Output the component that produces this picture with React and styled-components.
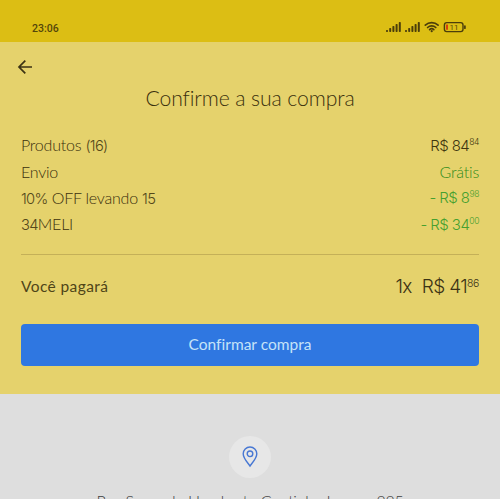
import React from 'react';
import styled, { createGlobalStyle } from 'styled-components';

const GlobalStyle = createGlobalStyle`
  body {
    margin: 0;
    background: #dedede;
    overflow: hidden;
  }
`;

const Screen = styled.div`
  box-sizing: border-box;
  width: 500px;
  height: 499px;
  overflow: hidden;
  background: #dedede;
  font-family: Lato, sans-serif;
  font-variant-ligatures: none;
  color: #3a300c;
`;

const StatusBar = styled.div`
  box-sizing: border-box;
  display: flex;
  justify-content: space-between;
  height: 42px;
  padding: 20px 33px 0 32px;
  background: #dcbe14;
`;

const Clock = styled.span`
  font-family: Roboto, sans-serif;
  font-size: 10.5px;
  font-weight: 500;
  line-height: 17px;
  color: #54460a;
`;

const StatusIcons = styled.svg`
  display: block;
  width: 82px;
  height: 16px;
`;

const Summary = styled.div`
  box-sizing: border-box;
  height: 352px;
  padding: 16px 21px 0;
  background: #e5d26c;
`;

const BackIcon = styled.svg`
  display: block;
  width: 18px;
  height: 18px;
  margin-left: -5px;
`;

const Title = styled.h1`
  margin: 8px 0 0;
  text-align: center;
  font-size: 21.2px;
  font-weight: 300;
  line-height: 28px;
  letter-spacing: -0.1px;
`;

const Lines = styled.div`
  display: grid;
  grid-auto-rows: 26.4px;
  margin-top: 20px;
`;

const Line = styled.div`
  display: flex;
  justify-content: space-between;
  align-items: center;
  font-size: 16px;
  font-weight: 300;
`;

const Label = styled.span`
  letter-spacing: -0.22px;
`;

const Amount = styled.span`
  font-family: Inter, sans-serif;
  font-size: 15px;
  letter-spacing: -0.55px;
  color: ${(props) => (props.$green ? '#46a02f' : '#40360f')};
`;

const Free = styled.span`
  font-size: 16px;
  letter-spacing: -0.2px;
  color: #2f8c1a;
`;

const Num = styled.span`
  font-family: Inter, sans-serif;
  font-weight: 300;
  font-size: 0.92em;
  letter-spacing: -0.7px;
  color: #54481a;
`;

const Cents = styled.sup`
  font-size: ${(props) => props.$size || '8.5px'};
  line-height: 0;
  vertical-align: 6px;
  letter-spacing: -0.4px;
`;

const Divider = styled.hr`
  height: 1px;
  margin: 16px 0 0;
  border: 0;
  background: #c4b058;
`;

const Total = styled.div`
  display: flex;
  justify-content: space-between;
  align-items: center;
  height: 30px;
  margin-top: 17px;
  color: #4f4518;
`;

const TotalLabel = styled.span`
  margin-top: -2px;
  font-size: 15.5px;
  letter-spacing: 0.4px;
`;

const TotalAmount = styled.span`
  display: flex;
  gap: 10px;
  font-family: Inter, sans-serif;
  font-weight: 300;
  font-size: 19px;
  letter-spacing: -0.65px;
  color: #3c3314;
`;

const Button = styled.button`
  display: block;
  width: 100%;
  height: 42px;
  margin-top: 22px;
  padding: 0 0 2px;
  border: 0;
  border-radius: 4px;
  background: #2f77e1;
  color: #c5e3f8;
  font-family: Lato, sans-serif;
  font-size: 15.5px;
  font-variant-ligatures: none;
`;

const Delivery = styled.div`
  display: flex;
  flex-direction: column;
  align-items: center;
  padding-top: 42px;
`;

const PinCircle = styled.div`
  display: flex;
  align-items: center;
  justify-content: center;
  width: 42px;
  height: 42px;
  border-radius: 50%;
  background: #e7e7e7;
`;

const Address = styled.div`
  margin-top: 11px;
  font-size: 16px;
  font-weight: 300;
  line-height: 24px;
  letter-spacing: -0.28px;
  white-space: nowrap;
  color: #404040;
`;

const signalBars = [2, 4, 6, 8, 10];

const Signal = ({ x }) => (
  <g fill="#4b3e0b">
    {signalBars.map((h, i) => (
      <rect key={h} x={x + i * 3.2} y={12 - h} width="2" height={h} rx="0.7" />
    ))}
  </g>
);

const App = () => (
  <Screen>
    <GlobalStyle />
    <StatusBar>
      <Clock>23:06</Clock>
      <StatusIcons viewBox="0 0 82 16">
        <Signal x={1} />
        <Signal x={20} />
        <g fill="none" stroke="#4b3e0b" strokeWidth="1.7" strokeLinecap="round">
          <path d="M40.3 5.2a9.5 9.5 0 0 1 12.8 0" />
          <path d="M42.6 7.5a6 6 0 0 1 8.2 0" />
          <path d="M44.6 9.7a3 3 0 0 1 4.2 0" />
          <rect x="59.4" y="2.6" width="18.6" height="9" rx="2.3" strokeWidth="1.4" />
          <path d="M79.9 6v2.2" />
        </g>
        <circle cx="46.7" cy="11.2" r="1.1" fill="#4b3e0b" />
        <rect x="61" y="4.4" width="2" height="5.4" rx="0.4" fill="#d8400c" />
        <text x="69" y="10" textAnchor="middle" fontFamily="Roboto" fontSize="8" fill="#54460a">11</text>
      </StatusIcons>
    </StatusBar>
    <Summary>
      <BackIcon viewBox="0 0 18 18" fill="none" stroke="#3c3314" strokeWidth="1.7">
        <path d="M16 9H3.2M9.3 2.7 3 9l6.3 6.3" />
      </BackIcon>
      <Title>Confirme a sua compra</Title>
      <Lines>
        <Line>
          <Label>Produtos <Num>(16)</Num></Label>
          <Amount>R$ 84<Cents>84</Cents></Amount>
        </Line>
        <Line>
          <Label>Envio</Label>
          <Free>Grátis</Free>
        </Line>
        <Line>
          <Label><Num>10%</Num> OFF levando <Num>15</Num></Label>
          <Amount $green>- R$ 8<Cents>98</Cents></Amount>
        </Line>
        <Line>
          <Label><Num>34</Num>MELI</Label>
          <Amount $green>- R$ 34<Cents>00</Cents></Amount>
        </Line>
      </Lines>
      <Divider />
      <Total>
        <TotalLabel>Você pagará</TotalLabel>
        <TotalAmount>
          <span>1x</span>
          <span>R$ 41<Cents $size="10.5px">86</Cents></span>
        </TotalAmount>
      </Total>
      <Button>Confirmar compra</Button>
    </Summary>
    <Delivery>
      <PinCircle>
        <svg width="16" height="22" viewBox="0 0 16 22" fill="none" stroke="#4777d3" strokeWidth="1.4">
          <path d="M8 20C5.8 16.8 1.2 12.5 1.2 7.8a6.8 6.8 0 0 1 13.6 0C14.8 12.5 10.2 16.8 8 20Z" />
          <circle cx="8" cy="7.8" r="2.8" />
        </svg>
      </PinCircle>
      <Address>Rua Segundo Humberto Coutinho Lemos, 225</Address>
    </Delivery>
  </Screen>
);

export default App;
